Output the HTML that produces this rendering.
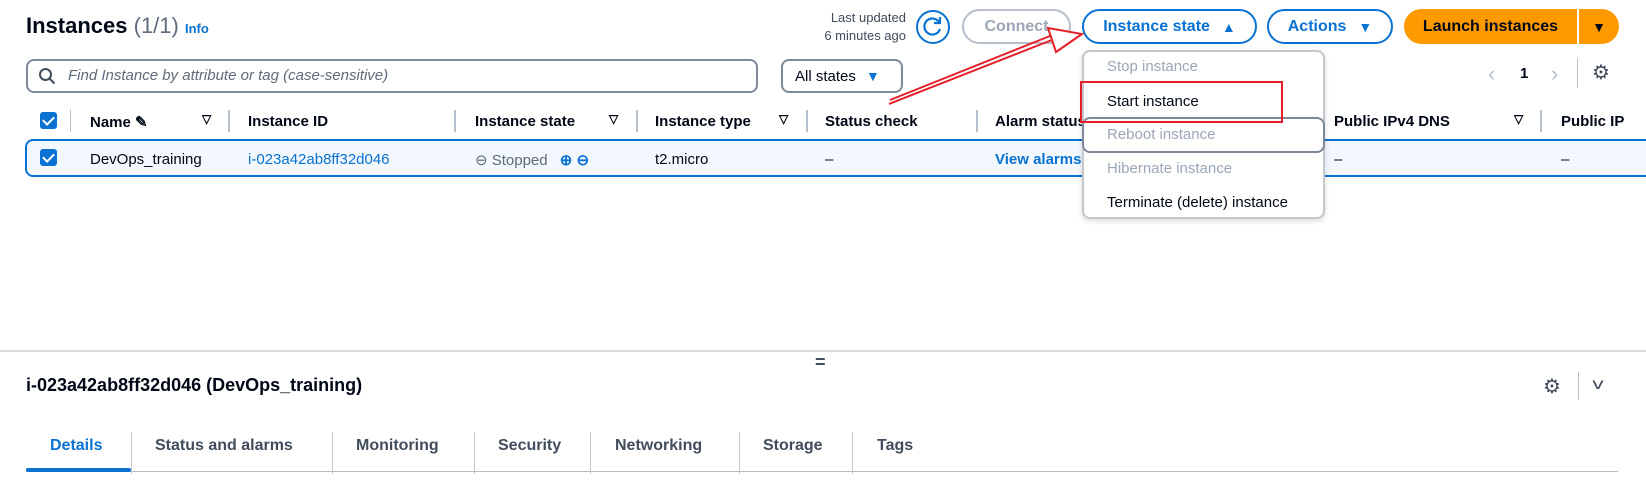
<!DOCTYPE html>
<html><head><meta charset="utf-8"><style>
*{box-sizing:border-box;margin:0;padding:0}
body{width:1646px;height:488px;background:#fff;font-family:"Liberation Sans",sans-serif;color:#000716;position:relative;overflow:hidden;font-size:15px}
.a{position:absolute;white-space:nowrap}
.b{font-weight:bold}
.btn{position:absolute;border:2px solid #0972d3;border-radius:20px;color:#0972d3;font-weight:bold;font-size:16px;display:flex;align-items:center;justify-content:center;gap:12px;height:35px;top:9px;background:#fff}
.sep{position:absolute;width:2px;background:#b6bec9}
.cb{position:absolute;width:17px;height:17px;background:#0972d3;border-radius:3px}
.cb:after{content:"";position:absolute;left:5px;top:2px;width:5px;height:9px;border:solid #fff;border-width:0 2px 2px 0;transform:rotate(45deg)}
.tri{font-size:14px}
.mi{position:absolute;left:1107px;font-size:15px}
.g{color:#9ba7b6}
.tab{position:absolute;top:437px;font-weight:bold;font-size:16px;color:#414d5c}
.tsep{position:absolute;top:432px;height:42px;width:1px;background:#c6c6cd}
</style></head><body>
<div class="a" style="left:26px;top:13px;font-size:22px"><span class="b">Instances</span> <span style="color:#5f6b7a">(1/1)</span> <span style="color:#0972d3;font-weight:bold;font-size:13px">Info</span></div>
<div class="a" style="right:740px;top:9px;font-size:13px;color:#414d5c;text-align:right;line-height:18px">Last updated<br>6 minutes ago</div>
<svg class="a" style="left:915px;top:9px" width="36" height="36" viewBox="0 0 36 36"><circle cx="18" cy="18" r="16" fill="#fff" stroke="#0972d3" stroke-width="2"/><path d="M24 13a8 8 0 1 0 1 7" fill="none" stroke="#0972d3" stroke-width="2.2"/><path d="M25 8v6h-6" fill="none" stroke="#0972d3" stroke-width="2.2"/></svg>
<div class="btn" style="left:962px;width:109px;border-color:#b6bec9;color:#9ba7b6">Connect</div>
<div class="btn" style="left:1082px;width:175px">Instance state <span class="tri">▲</span></div>
<div class="btn" style="left:1267px;width:126px">Actions <span class="tri">▼</span></div>
<div class="btn" style="left:1404px;width:173px;background:#ff9900;border-color:#ff9900;color:#000716;border-radius:20px 0 0 20px">Launch instances</div>
<div class="btn" style="left:1579px;width:40px;background:#ff9900;border-color:#ff9900;color:#000716;border-radius:0 20px 20px 0"><span class="tri">▼</span></div>

<div class="a" style="left:26px;top:59px;width:732px;height:34px;border:2px solid #7d8998;border-radius:8px"></div>
<svg class="a" style="left:38px;top:67px" width="18" height="18"><circle cx="7.5" cy="7.5" r="5.5" fill="none" stroke="#414d5c" stroke-width="2"/><path d="M11.5 11.5l5 5" stroke="#414d5c" stroke-width="2"/></svg>
<div class="a" style="left:68px;top:67px;font-style:italic;color:#5f6b7a">Find Instance by attribute or tag (case-sensitive)</div>
<div class="a" style="left:781px;top:59px;width:122px;height:34px;border:2px solid #7d8998;border-radius:8px;padding:7px 12px;font-size:15px">All states <span class="tri" style="color:#0972d3;margin-left:6px">▼</span></div>
<div class="a" style="left:1488px;top:61px;font-size:22px;color:#b6bec9">‹</div>
<div class="a b" style="left:1520px;top:65px">1</div>
<div class="a" style="left:1551px;top:61px;font-size:22px;color:#b6bec9">›</div>
<div class="sep" style="left:1577px;top:58px;height:30px;width:1px"></div>
<div class="a" style="left:1592px;top:60px;font-size:20px;color:#414d5c">⚙</div>

<div class="cb" style="left:40px;top:112px"></div>
<div class="sep" style="left:70px;top:110px;height:22px;width:1px"></div>
<div class="a b" style="left:90px;top:113px">Name ✎</div>
<div class="a b" style="left:202px;top:112px;font-size:12px">▽</div>
<div class="sep" style="left:228px;top:110px;height:22px"></div>
<div class="a b" style="left:248px;top:113px">Instance ID</div>
<div class="sep" style="left:454px;top:110px;height:22px"></div>
<div class="a b" style="left:475px;top:113px">Instance state</div>
<div class="a b" style="left:609px;top:112px;font-size:12px">▽</div>
<div class="sep" style="left:636px;top:110px;height:22px"></div>
<div class="a b" style="left:655px;top:113px">Instance type</div>
<div class="a b" style="left:779px;top:112px;font-size:12px">▽</div>
<div class="sep" style="left:806px;top:110px;height:22px"></div>
<div class="a b" style="left:825px;top:113px">Status check</div>
<div class="sep" style="left:976px;top:110px;height:22px"></div>
<div class="a b" style="left:995px;top:113px">Alarm status</div>
<div class="a b" style="left:1334px;top:113px">Public IPv4 DNS</div>
<div class="a b" style="left:1514px;top:112px;font-size:12px">▽</div>
<div class="sep" style="left:1540px;top:110px;height:22px"></div>
<div class="a b" style="left:1561px;top:113px">Public IP</div>

<div class="a" style="left:25px;top:139px;width:1640px;height:38px;border:2px solid #0972d3;border-radius:8px;background:#f2f8fd"></div>
<div class="cb" style="left:40px;top:149px"></div>
<div class="a" style="left:90px;top:151px">DevOps_training</div>
<div class="a" style="left:248px;top:151px;color:#0972d3">i-023a42ab8ff32d046</div>
<div class="a" style="left:475px;top:151px;color:#5f6b7a">⊖ Stopped <span style="color:#0972d3;font-weight:bold;margin-left:8px">⊕ ⊖</span></div>
<div class="a" style="left:655px;top:151px">t2.micro</div>
<div class="a" style="left:825px;top:151px">–</div>
<div class="a b" style="left:995px;top:151px;color:#0972d3">View alarms</div>
<div class="a" style="left:1334px;top:151px">–</div>
<div class="a" style="left:1561px;top:151px">–</div>

<div class="a" style="left:1082px;top:50px;width:243px;height:169px;border:2px solid #c6c6cd;border-radius:8px;background:#fff;box-shadow:0 2px 6px rgba(0,0,0,.15)"></div>
<div class="a" style="left:1082px;top:117px;width:243px;height:36px;border:2px solid #7d8998;border-radius:8px"></div>
<div class="mi g" style="top:58px">Stop instance</div>
<div class="mi" style="top:93px">Start instance</div>
<div class="mi g" style="top:126px">Reboot instance</div>
<div class="mi g" style="top:160px">Hibernate instance</div>
<div class="mi" style="top:194px">Terminate (delete) instance</div>
<div class="a" style="left:1080px;top:81px;width:203px;height:42px;border:2px solid #e3202a"></div>
<svg class="a" style="left:0;top:0" width="1646" height="488"><g stroke="#e3202a" stroke-width="2" fill="none"><path d="M889 104L1062 36M890 100L1060 32"/><path d="M1048 28L1082 34L1056 52Z" fill="#fff"/></g></svg>

<div class="a" style="left:0;top:350px;width:1646px;height:2px;background:#d5dbdb"></div>
<div class="a b" style="left:815px;top:352px;font-size:18px;color:#414d5c">=</div>
<div class="a b" style="left:26px;top:375px;font-size:18px">i-023a42ab8ff32d046 (DevOps_training)</div>
<div class="a" style="left:1543px;top:374px;font-size:20px;color:#414d5c">⚙</div>
<div class="sep" style="left:1578px;top:372px;height:28px;width:1px"></div>
<div class="a" style="left:1594px;top:376px;font-size:16px;color:#414d5c;transform:scaleX(1.4)">v</div>

<div class="tab" style="left:50px;color:#0972d3">Details</div>
<div class="tsep" style="left:131px"></div>
<div class="tab" style="left:155px">Status and alarms</div>
<div class="tsep" style="left:332px"></div>
<div class="tab" style="left:356px">Monitoring</div>
<div class="tsep" style="left:474px"></div>
<div class="tab" style="left:498px">Security</div>
<div class="tsep" style="left:590px"></div>
<div class="tab" style="left:615px">Networking</div>
<div class="tsep" style="left:739px"></div>
<div class="tab" style="left:763px">Storage</div>
<div class="tsep" style="left:852px"></div>
<div class="tab" style="left:877px">Tags</div>
<div class="a" style="left:26px;top:471px;width:1592px;height:1px;background:#b6bec9"></div>
<div class="a" style="left:26px;top:468px;width:105px;height:4px;background:#0972d3;border-radius:2px"></div>
</body></html>
